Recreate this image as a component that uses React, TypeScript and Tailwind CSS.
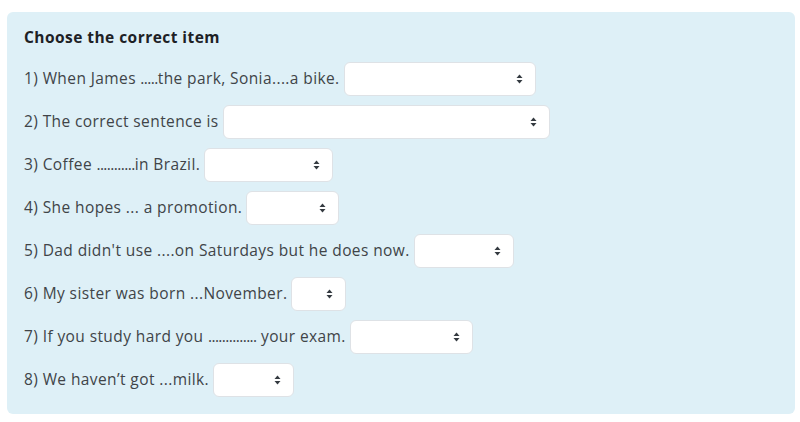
const ROWS: { text: string; width: string }[] = [
  { text: '1) When James .....the park, Sonia....a bike.', width: 'w-[192px]' },
  { text: '2) The correct sentence is', width: 'w-[327px]' },
  { text: '3) Coffee ...........in Brazil.', width: 'w-[129px]' },
  { text: '4) She hopes ... a promotion.', width: 'w-[93px]' },
  { text: "5) Dad didn't use ....on Saturdays but he does now.", width: 'w-[100px]' },
  { text: '6) My sister was born ...November.', width: 'w-[55px]' },
  { text: '7) If you study hard you .............. your exam.', width: 'w-[123px]' },
  { text: '8) We haven’t got ...milk.', width: 'w-[81px]' },
]

// long dot runs are tighter in the original font
function Sentence({ text }: { text: string }) {
  const parts = text.split(/(\.{5,})/)
  return (
    <span className="whitespace-nowrap">
      {parts.map((p, i) =>
        /^\.{5,}$/.test(p) ? (
          <span key={i} className="tracking-[-0.6px]">
            {p}
          </span>
        ) : (
          p
        ),
      )}
    </span>
  )
}

function SortIcon() {
  return (
    <svg width="7" height="10" viewBox="0 0 7 10" className="shrink-0">
      <path d="M3.5 0.5 L6.5 4 L0.5 4 Z" fill="#343a40" />
      <path d="M3.5 9.5 L6.5 6 L0.5 6 Z" fill="#343a40" />
    </svg>
  )
}

function Select({ width }: { width: string }) {
  return (
    <div
      className={`${width} ml-1 flex h-[34px] shrink-0 items-center justify-end rounded-md border border-[#dee2e6] bg-white pr-3`}
    >
      <SortIcon />
    </div>
  )
}

export default function App() {
  return (
    <div className="h-[422px] w-[800px] bg-white px-[7px] pt-3 font-['Open_Sans',sans-serif]">
      <div className="h-[402px] w-[788px] rounded-md bg-[#def0f7] px-[17px] pt-[13px]">
        <h2 className="mb-[13px] text-[15.5px] leading-6 font-bold tracking-[0.45px] text-[#1d2125]">
          Choose the correct item
        </h2>
        <div className="flex flex-col gap-[9px]">
          {ROWS.map((row, i) => (
            <div
              key={i}
              className="flex h-[34px] items-center text-[15.5px] tracking-[0.4px] text-[#404448]"
            >
              <Sentence text={row.text} />
              <Select width={row.width} />
            </div>
          ))}
        </div>
      </div>
    </div>
  )
}
